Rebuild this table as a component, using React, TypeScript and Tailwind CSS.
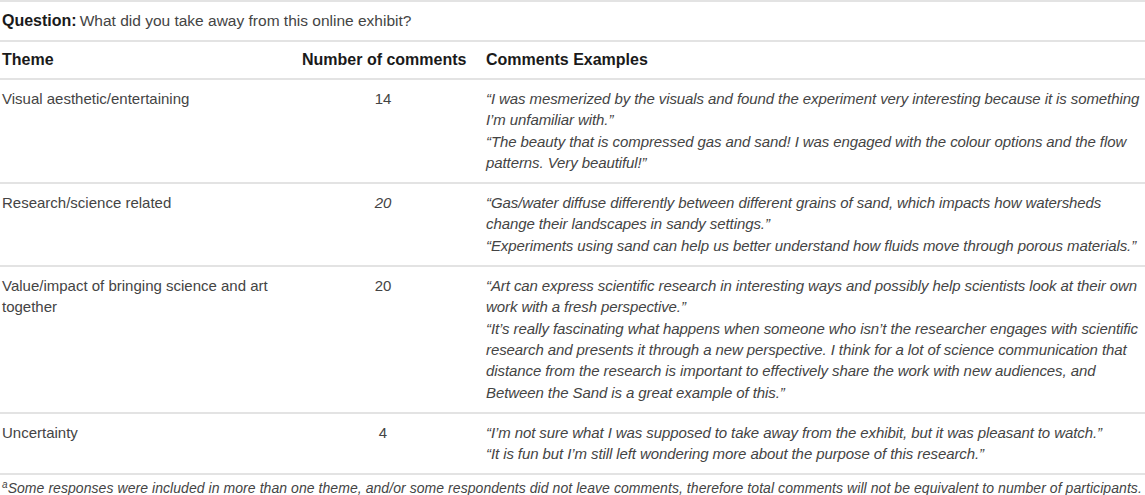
import React from "react";

type Row = {
  theme: string[];
  count: string;
  italicCount?: boolean;
  lines: string[];
};

// line breaks follow the printed table
const rows: Row[] = [
  {
    theme: ["Visual aesthetic/entertaining"],
    count: "14",
    lines: [
      "\u201cI was mesmerized by the visuals and found the experiment very interesting because it is something",
      "I\u2019m unfamiliar with.\u201d",
      "\u201cThe beauty that is compressed gas and sand! I was engaged with the colour options and the flow",
      "patterns. Very beautiful!\u201d",
    ],
  },
  {
    theme: ["Research/science related"],
    count: "20",
    italicCount: true,
    lines: [
      "\u201cGas/water diffuse differently between different grains of sand, which impacts how watersheds",
      "change their landscapes in sandy settings.\u201d",
      "\u201cExperiments using sand can help us better understand how fluids move through porous materials.\u201d",
    ],
  },
  {
    theme: ["Value/impact of bringing science and art", "together"],
    count: "20",
    lines: [
      "\u201cArt can express scientific research in interesting ways and possibly help scientists look at their own",
      "work with a fresh perspective.\u201d",
      "\u201cIt\u2019s really fascinating what happens when someone who isn\u2019t the researcher engages with scientific",
      "research and presents it through a new perspective. I think for a lot of science communication that",
      "distance from the research is important to effectively share the work with new audiences, and",
      "Between the Sand is a great example of this.\u201d",
    ],
  },
  {
    theme: ["Uncertainty"],
    count: "4",
    lines: [
      "\u201cI\u2019m not sure what I was supposed to take away from the exhibit, but it was pleasant to watch.\u201d",
      "\u201cIt is fun but I\u2019m still left wondering more about the purpose of this research.\u201d",
    ],
  },
];

export default function App() {
  return (
    <div
      className="w-[1145px] h-[495px] bg-white text-[#444] text-[15px] overflow-hidden"
      style={{ fontFamily: '"Liberation Sans", Arial, sans-serif' }}
    >
      <div className="border-t-2 border-[#e3e3e3] h-[40px] flex items-center pl-[2px] text-[15.5px]">
        <span className="font-bold text-[#1a1a1a] text-[16px]">Question:</span>
        <span className="ml-[3px]">What did you take away from this online exhibit?</span>
      </div>
      <div className="border-t-2 border-[#e3e3e3] grid grid-cols-[302px_184px_1fr] h-[38px] items-center font-bold text-[16px] text-[#1a1a1a]">
        <div className="pl-[2px]">Theme</div>
        <div>Number of comments</div>
        <div>Comments Examples</div>
      </div>
      {rows.map((r) => (
        <div
          key={r.count + r.theme[0]}
          className="border-t-2 border-[#e3e3e3] grid grid-cols-[302px_184px_1fr] pt-[8px] pb-[9px] leading-[21.3px]"
        >
          <div className="pl-[2px]">
            {r.theme.map((t) => (
              <div key={t}>{t}</div>
            ))}
          </div>
          <div className={"w-[162px] text-center " + (r.italicCount ? "italic" : "")}>{r.count}</div>
          <div className="italic whitespace-nowrap tracking-[-0.09px]">
            {r.lines.map((l) => (
              <div key={l}>{l}</div>
            ))}
          </div>
        </div>
      ))}
      <div className="border-t-2 border-[#e3e3e3] pt-[3px] italic text-[14px] tracking-[0.06px] leading-[20px] pl-[2px] whitespace-nowrap">
        <sup className="text-[10px]">a</sup>Some responses were included in more than one theme, and/or some respondents did not leave comments, therefore total comments will not be equivalent to number of participants.
      </div>
    </div>
  );
}
